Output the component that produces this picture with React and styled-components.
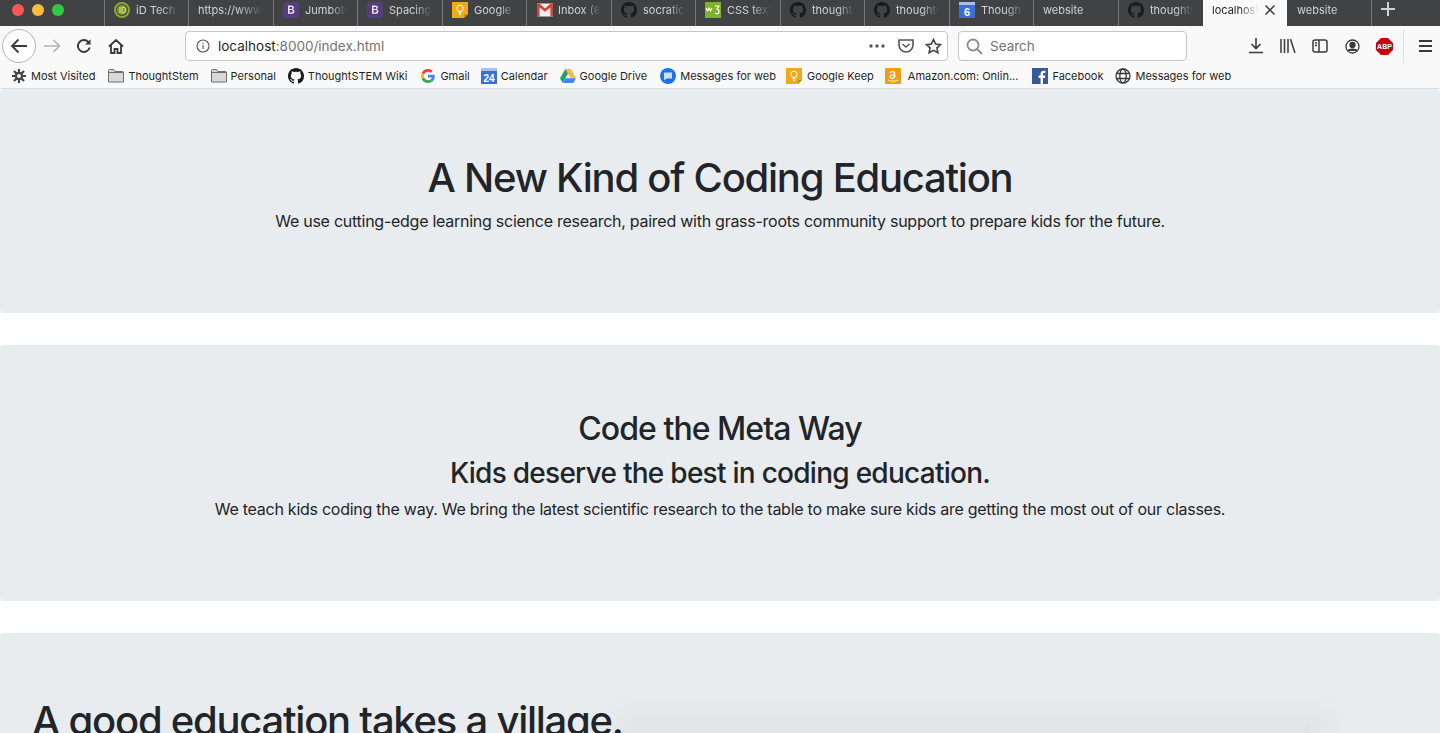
import React from 'react';
import styled, { createGlobalStyle } from 'styled-components';

const GlobalStyle = createGlobalStyle`
  html, body { margin: 0; padding: 0; height: 733px; overflow: hidden; background: #fff; }
  * { box-sizing: border-box; }
  body { font-family: Inter, "Liberation Sans", Arial, sans-serif; color: #212529; }
`;

const Screen = styled.div`
  position: relative;
  width: 1440px;
  height: 733px;
  overflow: hidden;
`;

const TabBar = styled.div`
  display: flex;
  height: 26px;
  background: #414244;
  padding-left: 104px;
`;

const Tab = styled.div`
  display: flex;
  align-items: center;
  gap: ${(p) => (p.$gap ? p.$gap : 6)}px;
  width: ${(p) => p.$w || 84}px;
  flex: none;
  padding: 0 ${(p) => (p.$active ? 11 : 10)}px 6px ${(p) => p.$pad || 9}px;
  height: 26px;
  border-left: 1px solid ${(p) => (p.$active || p.$noLine ? 'transparent' : '#77787a')};
  background: ${(p) => (p.$active ? '#f9f9fa' : 'transparent')};
  color: ${(p) => (p.$active ? '#1f1f1f' : '#d2d2d3')};
  font-size: 11px;
  white-space: nowrap;
  overflow: hidden;
`;

const TabLabel = styled.span`
  flex: 1;
  min-width: 0;
  overflow: hidden;
  -webkit-mask-image: linear-gradient(to right, #000 60%, transparent 100%);
  mask-image: linear-gradient(to right, #000 60%, transparent 100%);
`;

const Lights = styled.div`
  position: absolute;
  top: 4px;
  left: 12px;
  display: flex;
  gap: 8px;
`;

const Light = styled.span`
  width: 12px;
  height: 12px;
  border-radius: 50%;
  background: ${(p) => p.$c};
`;

const NewTab = styled.div`
  width: 34px;
  flex: none;
  height: 26px;
  padding: 0 1px 8px 0;
  border-left: 1px solid #77787a;
  display: flex;
  align-items: center;
  justify-content: center;
`;

const Toolbar = styled.div`
  display: flex;
  align-items: center;
  height: 40px;
  background: #f9f9fa;
  padding-left: 2px;
`;

const BackCircle = styled.div`
  width: 34px;
  height: 34px;
  border: 1px solid #b5b5b6;
  border-radius: 50%;
  background: #fff;
  display: flex;
  align-items: center;
  justify-content: center;
  flex: none;
`;

const NavIcon = styled.div`
  display: flex;
  align-items: center;
  justify-content: center;
  width: 32px;
  flex: none;
`;

const UrlBar = styled.div`
  display: flex;
  align-items: center;
  width: 763px;
  height: 30px;
  margin-left: 53px;
  padding: 0 5px 0 10px;
  background: #fff;
  border: 1px solid #c6c6c7;
  border-radius: 4px;
  font-size: 13.5px;
  flex: none;
`;

const UrlText = styled.span`
  margin-left: 8px;
  flex: 1;
  color: #737373;
  b { font-weight: 400; color: #1f1f1f; }
`;

const UrlActions = styled.div`
  display: flex;
  align-items: center;
  gap: 11px;
`;

const SearchBox = styled.div`
  display: flex;
  align-items: center;
  gap: 7px;
  width: 229px;
  height: 30px;
  margin-left: 10px;
  padding-left: 7px;
  background: #fff;
  border: 1px solid #c6c6c7;
  border-radius: 4px;
  color: #737373;
  font-size: 13.5px;
  flex: none;
`;

const ToolIcons = styled.div`
  display: flex;
  align-items: center;
  gap: 12px;
  margin-left: 59px;
`;

const ToolIcon = styled.div`
  width: 20px;
  height: 20px;
  display: flex;
  align-items: center;
  justify-content: center;
  flex: none;
`;

const Divider = styled.div`
  width: 1px;
  height: 34px;
  background: #e1e1e2;
  margin: 0 15px 0 9px;
  flex: none;
`;

const BookmarkBar = styled.div`
  display: flex;
  align-items: center;
  height: 23px;
  padding: 0 0 3px 12px;
  background: #f9f9fa;
  border-bottom: 1px solid #dcdcdd;
`;

const Bookmark = styled.div`
  display: flex;
  align-items: center;
  gap: ${(p) => p.$gap || 4}px;
  margin-right: ${(p) => p.$mr || 12}px;
  font-size: 11px;
  color: #1f1f1f;
  white-space: nowrap;
  flex: none;
`;

const Page = styled.main`
  display: flex;
  flex-direction: column;
  gap: 32px;
`;

const Jumbotron = styled.section`
  background: #e9ecef;
  border-radius: 4px;
  height: ${(p) => p.$h}px;
  padding-top: ${(p) => p.$top}px;
  padding-left: ${(p) => p.$left || 0}px;
  text-align: ${(p) => p.$align || 'center'};
`;

const Title = styled.h1`
  margin: 0;
  font-size: 40px;
  font-weight: 500;
  line-height: 48px;
  letter-spacing: -1.25px;
`;

const Subtitle = styled.h2`
  margin: 0;
  font-size: 32px;
  font-weight: 500;
  line-height: 38px;
  letter-spacing: -0.95px;
`;

const Tagline = styled.h3`
  margin: 8px 0 0;
  font-size: 28px;
  font-weight: 500;
  line-height: 34px;
  letter-spacing: -0.73px;
`;

const Lead = styled.p`
  margin: ${(p) => p.$mt}px 0 0;
  font-size: 16px;
  line-height: 24px;
  letter-spacing: -0.26px;
`;

const Shadow = styled.div`
  position: absolute;
  left: 620px;
  right: 110px;
  bottom: -22px;
  height: 44px;
  background: rgba(0, 0, 0, 0.03);
  filter: blur(14px);
`;

const GitHub = ({ size = 16, color = '#1b1b1d' }) => (
  <svg width={size} height={size} viewBox="0 0 16 16" fill={color} style={{ flex: 'none' }}>
    <path d="M8 0C3.58 0 0 3.58 0 8c0 3.54 2.29 6.53 5.47 7.59.4.07.55-.17.55-.38 0-.19-.01-.82-.01-1.49-2.01.37-2.53-.49-2.69-.94-.09-.23-.48-.94-.82-1.13-.28-.15-.68-.52-.01-.53.63-.01 1.08.58 1.23.82.72 1.21 1.87.87 2.33.66.07-.52.28-.87.51-1.07-1.78-.2-3.64-.89-3.64-3.95 0-.87.31-1.59.82-2.15-.08-.2-.36-1.02.08-2.12 0 0 .67-.21 2.2.82.64-.18 1.32-.27 2-.27s1.36.09 2 .27c1.53-1.04 2.2-.82 2.2-.82.44 1.1.16 1.92.08 2.12.51.56.82 1.27.82 2.15 0 3.07-1.87 3.75-3.65 3.95.29.25.54.73.54 1.48 0 1.07-.01 1.93-.01 2.2 0 .21.15.46.55.38A8.01 8.01 0 0 0 16 8c0-4.42-3.58-8-8-8z" />
  </svg>
);

const IdTech = () => (
  <svg width="16" height="16" viewBox="0 0 16 16" style={{ flex: 'none' }}>
    <circle cx="8" cy="8" r="7" fill="none" stroke="#8aa92f" strokeWidth="2" />
    <circle cx="8" cy="8" r="5" fill="#7f9a2c" />
    <path d="M6 5v6M8 5v6h.6a3 3 0 0 0 0-6z" fill="none" stroke="#d9e3a5" strokeWidth="1" />
  </svg>
);

const Bootstrap = () => (
  <svg width="16" height="16" viewBox="0 0 16 16" style={{ flex: 'none' }}>
    <rect width="16" height="16" rx="3" fill="#563d7c" />
    <path d="M5 3.500h3.400c1.600 0 2.500.8 2.500 2 0 .9-.5 1.500-1.300 1.800 1.100.2 1.800 1 1.800 2.100 0 1.500-1.100 2.300-2.900 2.300H5zm1.600 3.400h1.500c.9 0 1.300-.4 1.300-1s-.4-1-1.200-1H6.600zm0 3.500h1.700c1 0 1.500-.4 1.500-1.100s-.5-1.200-1.500-1.200H6.600z" fill="#e8e4ef" />
  </svg>
);

const Keep = () => (
  <svg width="16" height="16" viewBox="0 0 16 16" style={{ flex: 'none' }}>
    <path d="M0 0h16v12l-4 4H0z" fill="#f0aa17" />
    <path d="M16 12h-4v4z" fill="#c98c10" />
    <circle cx="8" cy="6.400" r="3.200" fill="none" stroke="#fff" strokeWidth="1" />
    <path d="M6.600 10.800h2.800M7 12.600h2" stroke="#fff" strokeWidth="1" />
  </svg>
);

const Gmail = () => (
  <svg width="16" height="14" viewBox="0 0 16 14" style={{ flex: 'none' }}>
    <rect width="16" height="13" y="0.5" fill="#efefef" />
    <path d="M0 .5h2.400L8 5.400 13.600.5H16v13h-2.600V4.400L8 8.800 2.600 4.400v9.100H0z" fill="#d0453a" />
  </svg>
);

const W3c = () => (
  <svg width="16" height="16" viewBox="0 0 16 16" style={{ flex: 'none' }}>
    <rect width="16" height="16" fill="#7ab22e" />
    <path d="M1 6l1.600 3 1.400-3 1.400 3L7 6M10 4h4l-2 3c1.500 0 2 1 2 2.400 0 1.300-1 2.300-2.200 2.300-.8 0-1.500-.4-1.800-1" fill="none" stroke="#fff" strokeWidth="1.100" />
  </svg>
);

const Calendar = ({ n, size = 16 }) => (
  <svg width={size} height={size} viewBox="0 0 16 16" style={{ flex: 'none' }}>
    <rect width="16" height="16" fill="#3b6fd8" />
    <rect width="16" height="3" fill="#a8c0ee" />
    <text x="8" y="13.500" textAnchor="middle" fontSize={n.length > 1 ? 10 : 11} fontWeight="700" fill="#fff" fontFamily="Liberation Sans, sans-serif">{n}</text>
  </svg>
);

const Folder = () => (
  <svg width="16" height="14" viewBox="0 0 16 14" style={{ flex: 'none' }}>
    <path d="M.5 13V1.500a1 1 0 0 1 1-1h4l1.500 2h7.500a1 1 0 0 1 1 1V13z" fill="#d8d8d8" stroke="#6e6e6e" />
    <path d="M.5 3.500h15" stroke="#6e6e6e" />
  </svg>
);

const Gear = () => (
  <svg width="14" height="14" viewBox="0 0 14 14" style={{ flex: 'none' }}>
    <g stroke="#444" strokeWidth="2.200">
      <path d="M7 0v14M0 7h14M2 2l10 10M12 2L2 12" />
    </g>
    <circle cx="7" cy="7" r="4.200" fill="#444" />
    <circle cx="7" cy="7" r="2" fill="#f9f9fa" />
  </svg>
);

const GoogleG = () => (
  <svg width="14" height="14" viewBox="0 0 48 48" style={{ flex: 'none' }}>
    <path fill="#EA4335" d="M24 9.500c3.500 0 6.700 1.200 9.200 3.600l6.900-6.900C35.900 2.400 30.500 0 24 0 14.600 0 6.500 5.400 2.600 13.200l8 6.200C12.500 13.700 17.800 9.500 24 9.500z" />
    <path fill="#4285F4" d="M47 24.500c0-1.600-.1-3.100-.4-4.500H24v9h12.900c-.6 3-2.200 5.500-4.700 7.200l7.700 6C44.400 38 47 31.800 47 24.500z" />
    <path fill="#FBBC05" d="M10.600 28.600C10.100 27.200 9.800 25.600 9.800 24s.3-3.200.8-4.600l-8-6.200C.9 16.400 0 20.100 0 24s.9 7.600 2.600 10.800z" />
    <path fill="#34A853" d="M24 48c6.500 0 11.900-2.100 15.900-5.800l-7.700-6c-2.200 1.400-4.900 2.300-8.200 2.300-6.200 0-11.500-4.200-13.400-9.900l-8 6.200C6.500 42.600 14.600 48 24 48z" />
  </svg>
);

const Drive = () => (
  <svg width="16" height="14" viewBox="0 0 16 14" style={{ flex: 'none' }}>
    <path d="M5.300 0h5.400l5.300 9h-5.400z" fill="#f6c02c" />
    <path d="M5.300 0l2.700 4.600L2.700 14 0 9.300z" fill="#1fa463" />
    <path d="M5.500 9.300H16L13.400 14H2.800z" fill="#4285f4" />
  </svg>
);

const Messages = () => (
  <svg width="16" height="16" viewBox="0 0 16 16" style={{ flex: 'none' }}>
    <circle cx="8" cy="8" r="8" fill="#1a73e8" />
    <path d="M4 4.500h8v6H6.500L4 12.500z" fill="#cfe0fb" />
  </svg>
);

const Amazon = () => (
  <svg width="16" height="16" viewBox="0 0 16 16" style={{ flex: 'none' }}>
    <rect width="16" height="16" rx="1" fill="#f59a13" />
    <path d="M5 5c.4-1 1.300-1.400 2.400-1.400 1.500 0 2.300.7 2.300 2v3.800M9.700 6.700c-2.500 0-4.500.4-4.500 2.100 0 1 .7 1.500 1.700 1.500 1.300 0 2.400-.9 2.800-1.900" fill="none" stroke="#fff" strokeWidth="1.300" />
    <path d="M3 12c3 1.800 7 1.800 10 0" fill="none" stroke="#fff" strokeWidth="1" />
  </svg>
);

const Facebook = () => (
  <svg width="16" height="16" viewBox="0 0 16 16" style={{ flex: 'none' }}>
    <rect width="16" height="16" fill="#3b5998" />
    <path d="M11 16v-6h2l.3-2.400H11V6c0-.7.2-1.100 1.200-1.100h1.200V2.800c-.2 0-.9-.1-1.800-.1-1.800 0-3 1.100-3 3.100v1.800h-2V10h2v6z" fill="#fff" />
  </svg>
);

const Globe = () => (
  <svg width="16" height="16" viewBox="0 0 16 16" fill="none" stroke="#3a3a3c" strokeWidth="1.300" style={{ flex: 'none' }}>
    <circle cx="8" cy="8" r="7" />
    <ellipse cx="8" cy="8" rx="3.200" ry="7" />
    <path d="M1.300 5.500h13.400M1.300 10.500h13.400" />
  </svg>
);

const Line = ({ w = 16, h = 16, vb = '0 0 16 16', color = '#3a3a3c', sw = 1.6, children }) => (
  <svg width={w} height={h} viewBox={vb} fill="none" stroke={color} strokeWidth={sw} style={{ flex: 'none' }}>
    {children}
  </svg>
);

const tabs = [
  { w: 84, icon: <IdTech />, label: 'iD Tech', pad: 9 },
  { w: 85, label: 'https://www.', pad: 9 },
  { w: 84, icon: <Bootstrap />, label: 'Jumbotr', pad: 9 },
  { w: 85, icon: <Bootstrap />, label: 'Spacing', pad: 9 },
  { w: 84, icon: <Keep />, label: 'Google K', pad: 9 },
  { w: 85, icon: <Gmail />, label: 'Inbox (6', pad: 10, gap: 5 },
  { w: 84, icon: <GitHub />, label: 'socratic', pad: 9 },
  { w: 85, icon: <W3c />, label: 'CSS text', pad: 9 },
  { w: 84, icon: <GitHub />, label: 'thoughts', pad: 9 },
  { w: 85, icon: <GitHub />, label: 'thoughts', pad: 9 },
  { w: 84, icon: <Calendar n="6" />, label: 'Thought', pad: 9 },
  { w: 85, label: 'website', pad: 9 },
  { w: 85, icon: <GitHub />, label: 'thoughts', pad: 9 },
];

const bookmarks = [
  { icon: <Gear />, label: 'Most Visited', mr: 13, gap: 5 },
  { icon: <Folder />, label: 'ThoughtStem', mr: 12 },
  { icon: <Folder />, label: 'Personal', mr: 12 },
  { icon: <GitHub />, label: 'ThoughtSTEM Wiki', mr: 14 },
  { icon: <GoogleG />, label: 'Gmail', mr: 11, gap: 5 },
  { icon: <Calendar n="24" />, label: 'Calendar', mr: 12 },
  { icon: <Drive />, label: 'Google Drive', mr: 13 },
  { icon: <Messages />, label: 'Messages for web', mr: 10 },
  { icon: <Keep />, label: 'Google Keep', mr: 11, gap: 5 },
  { icon: <Amazon />, label: 'Amazon.com: Onlin...', mr: 14, gap: 7 },
  { icon: <Facebook />, label: 'Facebook', mr: 12 },
  { icon: <Globe />, label: 'Messages for web', mr: 0 },
];

const App = () => (
  <Screen>
    <GlobalStyle />
    <TabBar>
      <Lights>
        <Light $c="#fc5753" />
        <Light $c="#fdbc40" />
        <Light $c="#33c748" />
      </Lights>
      {tabs.map((t, i) => (
        <Tab key={i} $w={t.w} $pad={t.pad} $gap={t.gap}>
          {t.icon}
          <TabLabel>{t.label}</TabLabel>
        </Tab>
      ))}
      <Tab $w={84} $pad={8} $active>
        <TabLabel>localhost</TabLabel>
        <Line w={12} h={12} vb="0 0 12 12" color="#3a3a3c" sw={1.5}>
          <path d="M1.500 1.500l9 9M10.500 1.500l-9 9" />
        </Line>
      </Tab>
      <Tab $w={84} $noLine>
        <TabLabel>website</TabLabel>
      </Tab>
      <NewTab>
        <svg width="14" height="14" viewBox="0 0 14 14" stroke="#d2d2d3" strokeWidth="2">
          <path d="M7 0v14M0 7h14" />
        </svg>
      </NewTab>
    </TabBar>

    <Toolbar>
      <BackCircle>
        <Line w={18} h={16} vb="0 0 18 16" sw={1.8}>
          <path d="M17 8H2M8.500 1.500L2 8l6.500 6.500" />
        </Line>
      </BackCircle>
      <NavIcon>
        <Line w={17} h={14} vb="0 0 17 14" color="#b1b1b3" sw={1.6}>
          <path d="M0 7h15M9.500 1l6 6-6 6" />
        </Line>
      </NavIcon>
      <NavIcon>
        <Line w={16} h={16} sw={1.9}>
          <path d="M13.700 9.500a6 6 0 1 1-1.300-5.500L14 6" />
          <path d="M14.500 1.200V6.500H9.200" fill="#3a3a3c" stroke="none" />
        </Line>
      </NavIcon>
      <NavIcon>
        <Line w={16} h={15} vb="0 0 16 15" sw={1.8}>
          <path d="M1 7.500L8 1l7 6.500M3 6v8h3.500v-4h3v4H13V6" />
        </Line>
      </NavIcon>

      <UrlBar>
        <Line w={14} h={14} vb="0 0 14 14" color="#555" sw={1.1}>
          <circle cx="7" cy="7" r="6" />
          <path d="M7 6v4.200M7 3.500v1.300" />
        </Line>
        <UrlText><b>localhost</b>:8000/index.html</UrlText>
        <UrlActions>
          <svg width="16" height="4" viewBox="0 0 16 4" fill="#555" style={{ marginRight: 2 }}>
            <circle cx="2" cy="2" r="1.700" /><circle cx="8" cy="2" r="1.700" /><circle cx="14" cy="2" r="1.700" />
          </svg>
          <Line w={16} h={14} vb="0 0 16 14" color="#555">
            <path d="M1 1h14v5a7 7 0 0 1-14 0z" />
            <path d="M4.500 5L8 8l3.500-3" />
          </Line>
          <Line w={17} h={16} vb="0 0 17 16" color="#444" sw={1.6}>
            <path d="M8.500 1.500l2.100 4.500 4.900.6-3.600 3.300 1 4.800-4.400-2.400-4.400 2.400 1-4.800L1.500 6.600l4.900-.6z" />
          </Line>
        </UrlActions>
      </UrlBar>

      <SearchBox>
        <Line w={17} h={17} vb="0 0 17 17" color="#8a8a8c" sw={1.8}>
          <circle cx="7" cy="7" r="5.500" />
          <path d="M11 11l5 5" />
        </Line>
        Search
      </SearchBox>

      <ToolIcons>
        <ToolIcon>
          <Line w={16} h={16} sw={1.6}>
            <path d="M8 0v10M3.500 6L8 10.500 12.500 6M1 14.500h14" />
          </Line>
        </ToolIcon>
        <ToolIcon>
          <Line w={16} h={14} vb="0 0 16 14" sw={1.5}>
            <path d="M1 0v14M4.500 0v14M8 0v14M10.500 0l4.500 14" />
          </Line>
        </ToolIcon>
        <ToolIcon>
          <Line w={16} h={14} vb="0 0 16 14" sw={1.5}>
            <rect x="1" y="1" width="14" height="12" rx="2" />
            <path d="M7 1v12M3 4h2M3 6.500h2" />
          </Line>
        </ToolIcon>
        <ToolIcon>
          <Line w={15} h={15} vb="0 0 15 15" sw={1.3}>
            <circle cx="7.500" cy="7.500" r="6.500" />
            <circle cx="7.500" cy="6" r="2.500" fill="#3a3a3c" />
            <path d="M3 12c1-2.500 8-2.500 9 0" fill="#3a3a3c" />
          </Line>
        </ToolIcon>
        <ToolIcon>
          <svg width="17" height="17" viewBox="0 0 17 17">
            <path d="M5 0h7l5 5v7l-5 5H5l-5-5V5z" fill="#c4070e" />
            <text x="8.500" y="11" textAnchor="middle" fontSize="7" fontWeight="700" fill="#fff" fontFamily="Liberation Sans, sans-serif">ABP</text>
          </svg>
        </ToolIcon>
      </ToolIcons>
      <Divider />
      <Line w={13} h={12} vb="0 0 13 12" sw={1.8}>
        <path d="M0 1h13M0 6h13M0 11h13" />
      </Line>
    </Toolbar>

    <BookmarkBar>
      {bookmarks.map((b, i) => (
        <Bookmark key={i} $mr={b.mr} $gap={b.gap}>
          {b.icon}
          {b.label}
        </Bookmark>
      ))}
    </BookmarkBar>

    <Page>
      <Jumbotron $h={224} $top={65}>
        <Title>A New Kind of Coding Education</Title>
        <Lead $mt={7}>We use cutting-edge learning science research, paired with grass-roots community support to prepare kids for the future.</Lead>
      </Jumbotron>
      <Jumbotron $h={256} $top={65}>
        <Subtitle>Code the Meta Way</Subtitle>
        <Tagline>Kids deserve the best in coding education.</Tagline>
        <Lead $mt={7}>We teach kids coding the way. We bring the latest scientific research to the table to make sure kids are getting the most out of our classes.</Lead>
      </Jumbotron>
      <Jumbotron $h={200} $top={64} $left={32} $align="left">
        <Title>A good education takes a village.</Title>
      </Jumbotron>
    </Page>
    <Shadow />
  </Screen>
);

export default App;
